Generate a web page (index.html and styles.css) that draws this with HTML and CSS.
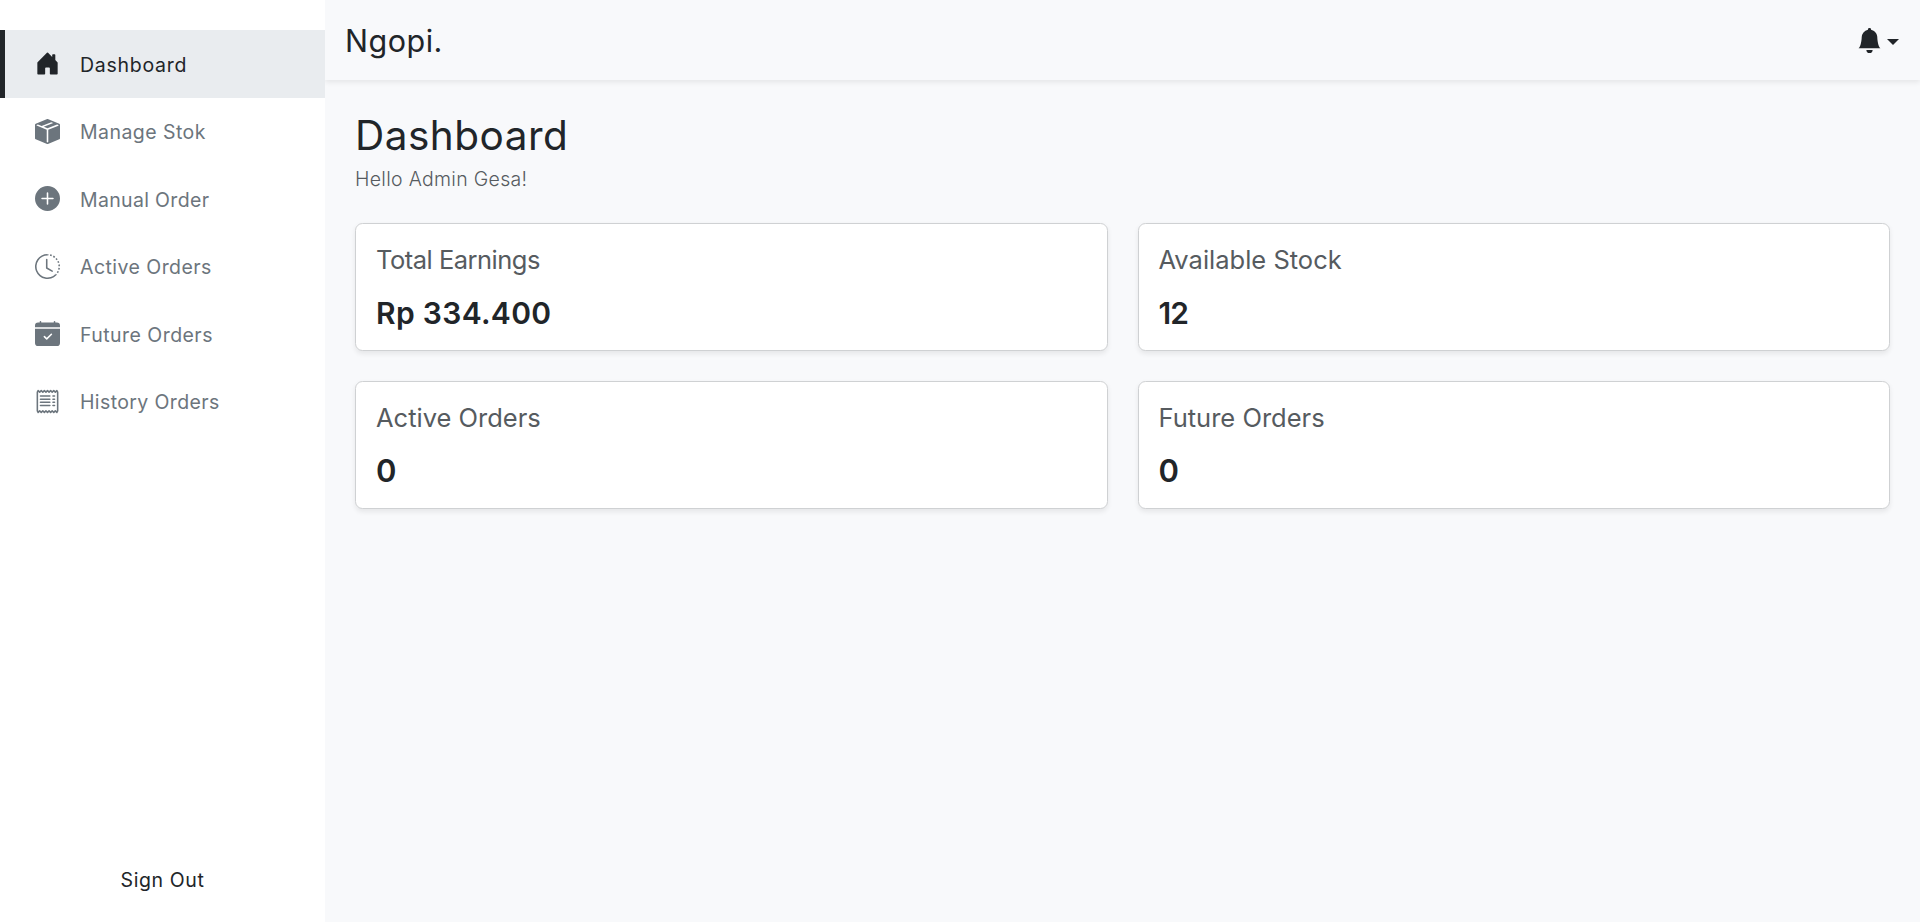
FILE: index.html
```html
<!DOCTYPE html>
<html lang="en">
<head>
<meta charset="utf-8">
<title>Ngopi. Dashboard</title>
<link rel="stylesheet" href="styles.css">
</head>
<body>
<div class="app">
  <aside class="sidebar">
    <nav class="menu">
      <a class="menu-item active"><svg class="icon" viewBox="0 0 16 16"><path d="M6.5 14.5v-3.505c0-.245.25-.495.5-.495h2c.25 0 .5.25.5.5v3.5a.5.5 0 0 0 .5.5h4a.5.5 0 0 0 .5-.5v-7a.5.5 0 0 0-.146-.354L13 5.793V2.5a.5.5 0 0 0-.5-.5h-1a.5.5 0 0 0-.5.5v1.293L8.354 1.146a.5.5 0 0 0-.708 0l-6 6A.5.5 0 0 0 1.5 7.5v7a.5.5 0 0 0 .5.5h4a.5.5 0 0 0 .5-.5"/></svg><span class="label l-dashboard">Dashboard</span></a>
      <a class="menu-item"><svg class="icon" viewBox="0 0 16 16"><path fill-rule="evenodd" d="M15.528 2.973a.75.75 0 0 1 .472.696v8.662a.75.75 0 0 1-.472.696l-7.25 2.9a.75.75 0 0 1-.557 0l-7.25-2.9A.75.75 0 0 1 0 12.331V3.669a.75.75 0 0 1 .471-.696L7.443.184l.01-.003.268-.108a.75.75 0 0 1 .558 0l.269.108.01.003zM10.404 2 4.25 4.461 1.846 3.5 1 3.839v.4l6.5 2.6v7.922l.5.2.5-.2V6.84l6.5-2.6v-.4l-.846-.339L8 5.961 5.596 5l6.154-2.461z"/></svg><span class="label">Manage Stok</span></a>
      <a class="menu-item"><svg class="icon" viewBox="0 0 16 16"><path d="M16 8A8 8 0 1 1 0 8a8 8 0 0 1 16 0M8.5 4.5a.5.5 0 0 0-1 0v3h-3a.5.5 0 0 0 0 1h3v3a.5.5 0 0 0 1 0v-3h3a.5.5 0 0 0 0-1h-3z"/></svg><span class="label l-manual">Manual Order</span></a>
      <a class="menu-item"><svg class="icon" viewBox="0 0 16 16"><path d="M8.515 1.019A7 7 0 0 0 8 1V0a8 8 0 0 1 .589.022zm2.004.45a7 7 0 0 0-.985-.299l.219-.976q.576.129 1.126.342zm1.37.71a7 7 0 0 0-.439-.27l.493-.87a8 8 0 0 1 .979.654l-.615.789a7 7 0 0 0-.418-.302zm1.834 1.79a7 7 0 0 0-.653-.796l.724-.69q.406.429.747.91zm.744 1.352a7 7 0 0 0-.214-.468l.893-.45a8 8 0 0 1 .45 1.088l-.95.313a7 7 0 0 0-.179-.483m.53 2.507a7 7 0 0 0-.1-1.025l.985-.17q.1.58.116 1.17zm-.131 1.538q.05-.254.081-.51l.993.123a8 8 0 0 1-.23 1.155l-.964-.267q.069-.247.12-.501m-.952 2.379q.276-.436.486-.908l.914.405q-.24.54-.555 1.038zm-.964 1.205q.183-.183.35-.378l.758.653a8 8 0 0 1-.401.432z"/><path d="M8 1a7 7 0 1 0 4.95 11.95l.707.707A8.001 8.001 0 1 1 8 0z"/><path d="M7.5 3a.5.5 0 0 1 .5.5v5.21l3.248 1.856a.5.5 0 0 1-.496.868l-3.5-2A.5.5 0 0 1 7 9V3.5a.5.5 0 0 1 .5-.5"/></svg><span class="label">Active Orders</span></a>
      <a class="menu-item"><svg class="icon" viewBox="0 0 16 16"><path d="M4 .5a.5.5 0 0 0-1 0V1H2a2 2 0 0 0-2 2v1h16V3a2 2 0 0 0-2-2h-1V.5a.5.5 0 0 0-1 0V1H4zM16 14V5H0v9a2 2 0 0 0 2 2h12a2 2 0 0 0 2-2m-5.146-5.146-3 3a.5.5 0 0 1-.708 0l-1.5-1.5a.5.5 0 0 1 .708-.708L7.5 10.793l2.646-2.647a.5.5 0 0 1 .708.708"/></svg><span class="label">Future Orders</span></a>
      <a class="menu-item"><svg class="icon" viewBox="0 0 16 16"><path d="M1.92.506a.5.5 0 0 1 .434.14L3 1.293l.646-.647a.5.5 0 0 1 .708 0L5 1.293l.646-.647a.5.5 0 0 1 .708 0L7 1.293l.646-.647a.5.5 0 0 1 .708 0L9 1.293l.646-.647a.5.5 0 0 1 .708 0l.646.647.646-.647a.5.5 0 0 1 .708 0l.646.647.646-.647a.5.5 0 0 1 .801.13l.5 1A.5.5 0 0 1 15 2v12a.5.5 0 0 1-.053.224l-.5 1a.5.5 0 0 1-.8.13L13 14.707l-.646.647a.5.5 0 0 1-.708 0L11 14.707l-.646.647a.5.5 0 0 1-.708 0L9 14.707l-.646.647a.5.5 0 0 1-.708 0L7 14.707l-.646.647a.5.5 0 0 1-.708 0L5 14.707l-.646.647a.5.5 0 0 1-.708 0L3 14.707l-.646.647a.5.5 0 0 1-.801-.13l-.5-1A.5.5 0 0 1 1 14V2a.5.5 0 0 1 .053-.224l.5-1a.5.5 0 0 1 .367-.27m.217 1.338L2 2.118v11.764l.137.274.51-.51a.5.5 0 0 1 .707 0l.646.647.646-.646a.5.5 0 0 1 .708 0l.646.646.646-.646a.5.5 0 0 1 .708 0l.646.646.646-.646a.5.5 0 0 1 .708 0l.646.646.646-.646a.5.5 0 0 1 .708 0l.646.646.646-.646a.5.5 0 0 1 .708 0l.509.509.137-.274V2.118l-.137-.274-.51.51a.5.5 0 0 1-.707 0L12 1.707l-.646.647a.5.5 0 0 1-.708 0L10 1.707l-.646.647a.5.5 0 0 1-.708 0L8 1.707l-.646.647a.5.5 0 0 1-.708 0L6 1.707l-.646.647a.5.5 0 0 1-.708 0L4 1.707l-.646.647a.5.5 0 0 1-.708 0z"/><path d="M3.5 4h6a.5.5 0 0 1 0 1h-6a.5.5 0 0 1 0-1m0 2h6a.5.5 0 0 1 0 1h-6a.5.5 0 0 1 0-1m0 2h6a.5.5 0 0 1 0 1h-6a.5.5 0 0 1 0-1m0 2h6a.5.5 0 0 1 0 1h-6a.5.5 0 0 1 0-1m8-6h1a.5.5 0 0 1 0 1h-1a.5.5 0 0 1 0-1m0 2h1a.5.5 0 0 1 0 1h-1a.5.5 0 0 1 0-1m0 2h1a.5.5 0 0 1 0 1h-1a.5.5 0 0 1 0-1m0 2h1a.5.5 0 0 1 0 1h-1a.5.5 0 0 1 0-1"/></svg><span class="label l-history">History Orders</span></a>
    </nav>
    <a class="sign-out">Sign Out</a>
  </aside>
  <div class="page">
    <header class="topbar">
      <span class="brand">Ngopi.</span>
      <button class="alerts" aria-label="Notifications"><svg class="icon" viewBox="0 0 16 16"><path d="M8 16a2 2 0 0 0 2-2H6a2 2 0 0 0 2 2m.995-14.901a1 1 0 1 0-1.99 0A5 5 0 0 0 3 6c0 1.098-.5 6-2 7h14c-1.5-1-2-5.902-2-7 0-2.42-1.72-4.44-4.005-4.901"/></svg><span class="caret"></span></button>
    </header>
    <main class="content">
      <h1 class="title">Dashboard</h1>
      <p class="greeting">Hello Admin Gesa!</p>
      <section class="cards">
        <article class="card"><h2 class="card-title t-earnings">Total Earnings</h2><p class="card-value">Rp 334.400</p></article>
        <article class="card"><h2 class="card-title">Available Stock</h2><p class="card-value v-stock">12</p></article>
        <article class="card"><h2 class="card-title">Active Orders</h2><p class="card-value v-count">0</p></article>
        <article class="card"><h2 class="card-title">Future Orders</h2><p class="card-value v-count">0</p></article>
      </section>
    </main>
  </div>
</div>
</body>
</html>
```
FILE: styles.css
```css
* { box-sizing: border-box; margin: 0; }
body { font: 400 19.5px/30px Inter, "Noto Sans", sans-serif; color: #212529; background: #f8f9fb; }
.app { display: flex; min-height: 100vh; }
.icon { display: block; width: 25px; height: 25px; fill: currentColor; flex: none; }

/* Sidebar, stacked above the top bar's shadow */
.sidebar { position: relative; z-index: 1; width: 325px; background: #fff; display: flex; flex-direction: column; justify-content: space-between; padding: 30px 0 27px; }
.menu-item { display: flex; align-items: center; gap: 20px; height: 67.5px; padding-left: 30px; border-left: 5px solid transparent; color: #6c757d; }
.menu-item.active { color: #212529; background: #e9ecef; border-left-color: #212529; }
.label { padding-top: 2px; letter-spacing: .45px; }
.l-dashboard { letter-spacing: .72px; }
.l-manual { letter-spacing: .33px; }
.l-history { letter-spacing: .38px; }
.sign-out { text-align: center; letter-spacing: .6px; }

/* Top bar */
.page { flex: 1; }
.topbar { height: 80px; display: flex; align-items: center; justify-content: space-between; padding: 0 21px 0 20px; box-shadow: 0 2.5px 5px rgba(0,0,0,.075); }
.brand { font-size: 30.5px; line-height: 44px; letter-spacing: .5px; padding-top: 2px; }
.alerts { display: flex; align-items: center; gap: 5px; border: 0; padding: 0; background: none; color: inherit; }
.caret { margin-top: 3px; border: 6px solid transparent; border-top-color: currentColor; border-bottom: 0; }

/* Content */
.content { padding: 32px 30px 30px; }
.title { font-size: 40.5px; font-weight: 400; line-height: 48px; letter-spacing: .5px; margin-bottom: 4px; }
.greeting { font-weight: 300; letter-spacing: .3px; color: #565b5f; margin-bottom: 29px; }
.cards { display: grid; grid-template-columns: 1fr 1fr; gap: 30px; }
.card { height: 127.75px; padding: 21px 20px; background: #fff; border: 1px solid #cfd1d3; border-radius: 7.5px; box-shadow: 0 2.5px 5px rgba(0,0,0,.075); }
.card-title { font-size: 25.5px; font-weight: 400; color: #565b5f; }
.t-earnings { letter-spacing: -.5px; }
.card-value { font-size: 30px; font-weight: 600; margin-top: 23px; letter-spacing: .33px; }
.v-stock { letter-spacing: -1px; }
.v-count { font-size: 31px; }
```
